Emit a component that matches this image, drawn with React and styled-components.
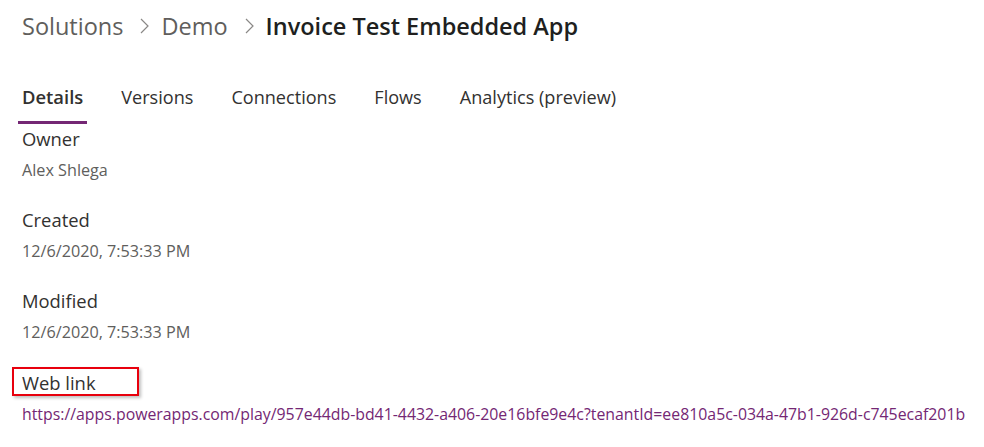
import React from 'react';
import styled, { createGlobalStyle } from 'styled-components';

const GlobalStyle = createGlobalStyle`
  body {
    margin: 0;
    background: #ffffff;
    font-family: "Open Sans", "Noto Sans", sans-serif;
    color: #323130;
  }
`;

const Page = styled.div`
  padding: 8px 22px 0;
`;

const Breadcrumb = styled.nav`
  display: flex;
  align-items: center;
  height: 36px;
  font-size: 23.5px;
  color: #605e5c;
`;

const Crumb = styled.span`
  color: ${(p) => (p.current ? '#201f1e' : '#605e5c')};
  font-weight: ${(p) => (p.current ? 600 : 400)};
`;

const Chevron = styled.span`
  display: flex;
  align-items: center;
  margin: 0 12px 0 17px;
`;

const Tabs = styled.div`
  display: flex;
  gap: 30px;
  margin-top: 38px;
  margin-left: -4px;
`;

const Tab = styled.div`
  position: relative;
  padding: 0 4px;
  height: 42px;
  line-height: 30px;
  font-size: ${(p) => (p.active ? '18.4px' : '18.1px')};
  color: #323130;
  font-weight: ${(p) => (p.active ? 600 : 400)};

  &::after {
    content: '';
    display: ${(p) => (p.active ? 'block' : 'none')};
    position: absolute;
    left: 0;
    right: 0;
    bottom: 0;
    height: 3px;
    background: #742774;
  }
`;

const Section = styled.div`
  display: flex;
  flex-direction: column;
  align-items: flex-start;
  height: 81px;
`;

const Label = styled.div`
  padding-top: 2px;
  font-size: 18.4px;
  line-height: 26px;
  color: #323130;
  ${(p) =>
    p.highlight &&
    `
    box-sizing: border-box;
    width: 127px;
    margin-left: -10px;
    padding: 2px 0 0 8px;
    border: 2px solid #e8000d;
    box-shadow: 2px 2px 3px rgba(0, 0, 0, 0.25);
    line-height: 23px;
  `}
`;

const Value = styled.div`
  margin-top: 7px;
  font-size: 16.2px;
  line-height: 22px;
  color: #605e5c;
`;

const Link = styled.a`
  margin-top: 7px;
  font-size: 15.85px;
  line-height: 22px;
  color: #742774;
  text-decoration: none;
  white-space: nowrap;
`;

const ChevronIcon = () => (
  <svg width="9" height="16" viewBox="0 0 9 16" fill="none">
    <path d="M1 1l7 7-7 7" stroke="#8a8886" strokeWidth="1.2" />
  </svg>
);

const tabs = ['Details', 'Versions', 'Connections', 'Flows', 'Analytics (preview)'];

const details = [
  { label: 'Owner', value: 'Alex Shlega' },
  { label: 'Created', value: '12/6/2020, 7:53:33 PM' },
  { label: 'Modified', value: '12/6/2020, 7:53:33 PM' },
];

export default function App() {
  return (
    <>
      <GlobalStyle />
      <Page>
        <Breadcrumb>
          <Crumb>Solutions</Crumb>
          <Chevron>
            <ChevronIcon />
          </Chevron>
          <Crumb>Demo</Crumb>
          <Chevron>
            <ChevronIcon />
          </Chevron>
          <Crumb current>Invoice Test Embedded App</Crumb>
        </Breadcrumb>
        <Tabs>
          {tabs.map((t, i) => (
            <Tab key={t} active={i === 0}>
              {t}
            </Tab>
          ))}
        </Tabs>
        {details.map((d) => (
          <Section key={d.label}>
            <Label>{d.label}</Label>
            <Value>{d.value}</Value>
          </Section>
        ))}
        <Section>
          <Label highlight>Web link</Label>
          <Link href="#">
            https://apps.powerapps.com/play/957e44db-bd41-4432-a406-20e16bfe9e4c?tenantId=ee810a5c-034a-47b1-926d-c745ecaf201b
          </Link>
        </Section>
      </Page>
    </>
  );
}
